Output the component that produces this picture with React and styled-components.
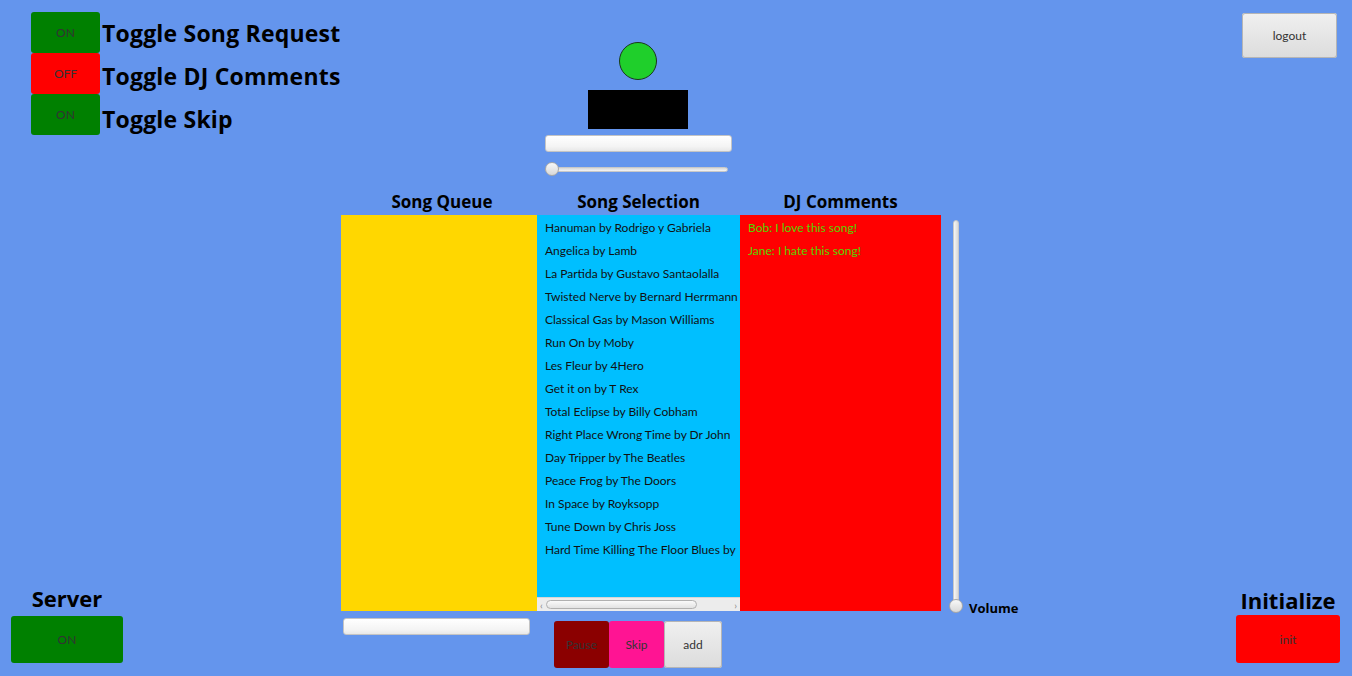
import React from "react";
import styled, { createGlobalStyle } from "styled-components";

const GlobalStyle = createGlobalStyle`
  html, body {
    margin: 0;
    padding: 0;
    background: #6495ed;
  }
  body {
    font-family: Lato, "Noto Sans", sans-serif;
  }
`;

const Page = styled.div`
  width: 1352px;
  height: 676px;
  display: grid;
  grid-template-columns: 341px 600px 99px 1fr;
  grid-template-rows: 185px 30px 396px 65px;
  background: #6495ed;
  overflow: hidden;
`;

const ToggleArea = styled.div`
  grid-area: 1 / 1;
  display: grid;
  grid-template-columns: 69px 1fr;
  column-gap: 2px;
  align-items: start;
  padding: 12px 0 0 31px;
`;

const Stack = styled.div`
  display: flex;
  flex-direction: column;
`;

const FxButton = styled.button`
  border: none;
  border-radius: 3px;
  padding: 0;
  font-family: Lato, "Noto Sans", sans-serif;
  font-size: 12px;
  color: #333;
  background: ${(p) => p.$bg || "linear-gradient(#f0f0f0, #dcdcdc)"};
  box-shadow: ${(p) => (p.$bg ? "none" : "inset 0 0 0 1px #b5b5b5")};
  width: ${(p) => p.$w}px;
  height: ${(p) => p.$h}px;
  cursor: pointer;
`;

const ToggleLabel = styled.div`
  font-family: "Open Sans", sans-serif;
  font-weight: 700;
  font-size: 23px;
  letter-spacing: 0.2px;
  line-height: 43px;
  white-space: nowrap;
  color: #000;
`;

const NowPlaying = styled.div`
  grid-area: 1 / 2;
  display: flex;
  flex-direction: column;
  align-items: center;
  padding-right: 6px;
`;

const Light = styled.div`
  width: 36px;
  height: 36px;
  margin-top: 42px;
  border-radius: 50%;
  background: #1fcf2b;
  border: 1px solid #1a3a1a;
`;

const Screen = styled.div`
  width: 100px;
  height: 39px;
  margin-top: 10px;
  background: #000;
`;

const TextField = styled.div`
  width: ${(p) => p.$w}px;
  height: 17px;
  box-sizing: border-box;
  border-radius: 3px;
  border: 1px solid #c4c4c4;
  background: linear-gradient(#ffffff, #f4f4f4 70%, #e8e8e8);
  margin: ${(p) => p.$m || "0"};
`;

const HSlider = styled.div`
  position: relative;
  width: 187px;
  height: 15px;
  margin-top: 10px;
`;

const HTrack = styled.div`
  position: absolute;
  left: 0;
  top: 5px;
  width: 183px;
  height: 5px;
  border-radius: 3px;
  background: linear-gradient(#d8d8d8, #f4f4f4);
  border: 1px solid #c8c8c8;
  box-sizing: border-box;
`;

const Thumb = styled.div`
  position: absolute;
  width: 14px;
  height: 14px;
  border-radius: 50%;
  background: linear-gradient(#f8f8f8, #d8d8d8);
  border: 1px solid #a8a8a8;
  box-sizing: border-box;
`;

const LogoutCell = styled.div`
  grid-column: 3 / 5;
  grid-row: 1;
  display: flex;
  justify-content: flex-end;
  align-items: flex-start;
  padding: 13px 15px 0 0;
`;

const Columns = styled.div`
  grid-row: ${(p) => p.$row};
  grid-column: 2;
  display: grid;
  grid-template-columns: 196px 203px 201px;
`;

const Header = styled.div`
  font-family: "Open Sans", sans-serif;
  font-weight: 700;
  font-size: 17px;
  line-height: 30px;
  padding: 2px 0 0 ${(p) => p.$shift || 0}px;
  text-align: center;
  color: #000;
`;

const Panel = styled.div`
  background: ${(p) => p.$bg};
  display: flex;
  flex-direction: column;
  overflow: hidden;
`;

const Items = styled.div`
  flex: 1;
  overflow: hidden;
  padding-top: 1px;
`;

const Item = styled.div`
  height: 23px;
  line-height: 23px;
  padding-left: 8px;
  white-space: nowrap;
  font-size: 12px;
  color: ${(p) => p.$color || "#111"};
`;

const ScrollBar = styled.div`
  height: 14px;
  background: #ececec;
  border-top: 1px solid #d6d6d6;
  box-sizing: border-box;
  display: flex;
  align-items: center;
  padding: 0 3px;
  gap: 3px;
  font-size: 10px;
  color: #888;
`;

const ScrollThumb = styled.div`
  width: 151px;
  height: 9px;
  border-radius: 5px;
  border: 1px solid #b0b0b0;
  background: linear-gradient(#fafafa, #e2e2e2);
  box-sizing: border-box;
`;

const ScrollGap = styled.div`
  flex: 1;
`;

const VolumeCell = styled.div`
  grid-row: 3;
  grid-column: 3;
  display: flex;
  align-items: flex-end;
  gap: 6px;
  padding-left: 8px;
`;

const VSlider = styled.div`
  position: relative;
  width: 14px;
  height: 393px;
  margin-bottom: -2px;
`;

const VTrack = styled.div`
  position: absolute;
  left: 4px;
  top: 0;
  width: 6px;
  bottom: 7px;
  border-radius: 3px;
  border: 1px solid #c8c8c8;
  box-sizing: border-box;
  background: linear-gradient(90deg, #f6f6f6, #d8d8d8);
`;

const VolumeLabel = styled.span`
  font-family: "Open Sans", sans-serif;
  font-weight: 700;
  font-size: 13px;
  line-height: 14px;
  color: #000;
  margin-bottom: -4px;
`;

const Controls = styled.div`
  display: flex;
  margin: 10px 0 0 17px;
  align-items: flex-start;
`;

const Corner = styled.div`
  grid-row: 2 / 5;
  grid-column: ${(p) => p.$col};
  display: flex;
  flex-direction: column;
  justify-content: flex-end;
  align-items: ${(p) => (p.$right ? "flex-end" : "flex-start")};
  padding: ${(p) => (p.$right ? "0 12px 13px 0" : "0 0 13px 11px")};
`;

const CornerBlock = styled.div`
  display: flex;
  flex-direction: column;
  align-items: center;
  gap: ${(p) => p.$gap}px;
`;

const CornerLabel = styled.div`
  font-family: "Open Sans", sans-serif;
  font-weight: 700;
  font-size: 22px;
  line-height: 28px;
  color: #000;
`;

const toggles = [
  { state: "ON", label: "Toggle Song Request" },
  { state: "OFF", label: "Toggle DJ Comments" },
  { state: "ON", label: "Toggle Skip" },
];

const songs = [
  "Hanuman by Rodrigo y Gabriela",
  "Angelica by Lamb",
  "La Partida by Gustavo Santaolalla",
  "Twisted Nerve by Bernard Herrmann",
  "Classical Gas by Mason Williams",
  "Run On by Moby",
  "Les Fleur by 4Hero",
  "Get it on by T Rex",
  "Total Eclipse by Billy Cobham",
  "Right Place Wrong Time by Dr John",
  "Day Tripper by The Beatles",
  "Peace Frog by The Doors",
  "In Space by Royksopp",
  "Tune Down by Chris Joss",
  "Hard Time Killing The Floor Blues by",
];

const comments = ["Bob: I love this song!", "Jane: I hate this song!"];

export default function App() {
  return (
    <>
      <GlobalStyle />
      <Page>
        <ToggleArea>
          <Stack>
            {toggles.map((t, i) => (
              <FxButton
                key={i}
                $w={69}
                $h={41}
                $bg={t.state === "ON" ? "#008000" : "#ff0000"}
              >
                {t.state}
              </FxButton>
            ))}
          </Stack>
          <Stack>
            {toggles.map((t) => (
              <ToggleLabel key={t.label}>{t.label}</ToggleLabel>
            ))}
          </Stack>
        </ToggleArea>

        <NowPlaying>
          <Light />
          <Screen />
          <TextField $w={187} $m="6px 0 0 0" />
          <HSlider>
            <HTrack />
            <Thumb style={{ left: 0, top: 0 }} />
          </HSlider>
        </NowPlaying>

        <LogoutCell>
          <FxButton $w={95} $h={45}>logout</FxButton>
        </LogoutCell>

        <Columns $row={2}>
          <Header $shift={6}>Song Queue</Header>
          <Header>Song Selection</Header>
          <Header>DJ Comments</Header>
        </Columns>

        <Columns $row={3}>
          <Panel $bg="#ffd700" />
          <Panel $bg="#00bfff">
            <Items>
              {songs.map((s) => (
                <Item key={s}>{s}</Item>
              ))}
            </Items>
            <ScrollBar>
              <span>&#x2039;</span>
              <ScrollThumb />
              <ScrollGap />
              <span>&#x203A;</span>
            </ScrollBar>
          </Panel>
          <Panel $bg="#ff0000">
            <Items>
              {comments.map((c) => (
                <Item key={c} $color="#55d400">{c}</Item>
              ))}
            </Items>
          </Panel>
        </Columns>

        <VolumeCell>
          <VSlider>
            <VTrack />
            <Thumb style={{ left: 0, bottom: 0 }} />
          </VSlider>
          <VolumeLabel>Volume</VolumeLabel>
        </VolumeCell>

        <Columns $row={4}>
          <TextField $w={187} $m="7px 0 0 2px" />
          <Controls>
            <FxButton $w={55} $h={47} $bg="#8b0000">Pause</FxButton>
            <FxButton $w={55} $h={47} $bg="#ff1493">Skip</FxButton>
            <FxButton $w={58} $h={47}>add</FxButton>
          </Controls>
        </Columns>

        <Corner $col={1}>
          <CornerBlock $gap={4}>
            <CornerLabel>Server</CornerLabel>
            <FxButton $w={112} $h={47} $bg="#008000">ON</FxButton>
          </CornerBlock>
        </Corner>

        <Corner $col={4} $right>
          <CornerBlock $gap={1}>
            <CornerLabel>Initialize</CornerLabel>
            <FxButton $w={104} $h={48} $bg="#ff0000">init</FxButton>
          </CornerBlock>
        </Corner>
      </Page>
    </>
  );
}
